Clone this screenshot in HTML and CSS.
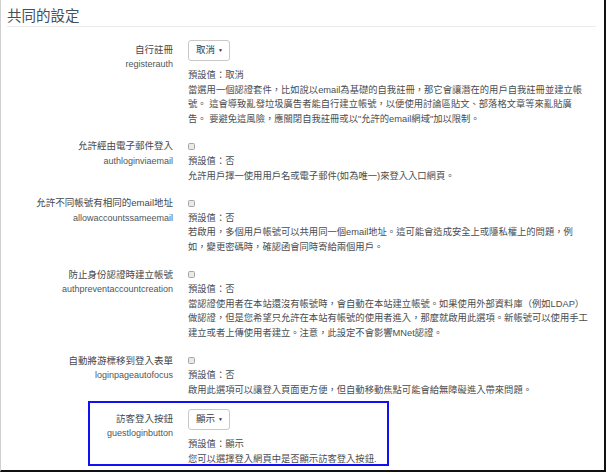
FILE: index.html
```html
<!DOCTYPE html>
<html lang="zh-Hant">
<head>
<meta charset="utf-8">
<title>共同的設定</title>
<link rel="stylesheet" href="styles.css">
</head>
<body>
<div class="frame">
  <h2 class="heading">共同的設定</h2>

  <div class="setting sel-row">
    <div class="lbl"><div class="name">自行註冊</div><div class="short">registerauth</div></div>
    <div class="body">
      <div class="select"><span>取消</span><span class="caret">▼</span></div>
      <div class="def">預設值：取消</div>
      <div class="desc">當選用一個認證套件，比如說以email為基礎的自我註冊，那它會讓潛在的用戶自我註冊並建立帳<br>號。 這會導致亂發垃圾廣告者能自行建立帳號，以便使用討論區貼文、部落格文章等來亂貼廣<br>告。 要避免這風險，應關閉自我註冊或以"允許的email網域"加以限制。</div>
    </div>
  </div>

  <div class="setting">
    <div class="lbl"><div class="name">允許經由電子郵件登入</div><div class="short">authloginviaemail</div></div>
    <div class="body">
      <div class="ctl"><span class="check"></span></div>
      <div class="def">預設值：否</div>
      <div class="desc">允許用戶擇一使用用戶名或電子郵件(如為唯一)來登入入口網頁。</div>
    </div>
  </div>

  <div class="setting">
    <div class="lbl"><div class="name">允許不同帳號有相同的email地址</div><div class="short">allowaccountssameemail</div></div>
    <div class="body">
      <div class="ctl"><span class="check"></span></div>
      <div class="def">預設值：否</div>
      <div class="desc">若啟用，多個用戶帳號可以共用同一個email地址。這可能會造成安全上或隱私權上的問題，例<br>如，變更密碼時，確認函會同時寄給兩個用戶。</div>
    </div>
  </div>

  <div class="setting">
    <div class="lbl"><div class="name">防止身份認證時建立帳號</div><div class="short">authpreventaccountcreation</div></div>
    <div class="body">
      <div class="ctl"><span class="check"></span></div>
      <div class="def">預設值：否</div>
      <div class="desc">當認證使用者在本站還沒有帳號時，會自動在本站建立帳號。如果使用外部資料庫（例如LDAP）<br>做認證，但是您希望只允許在本站有帳號的使用者進入，那麼就啟用此選項。新帳號可以使用手工<br>建立或者上傳使用者建立。注意，此設定不會影響MNet認證。</div>
    </div>
  </div>

  <div class="setting">
    <div class="lbl"><div class="name">自動將游標移到登入表單</div><div class="short">loginpageautofocus</div></div>
    <div class="body">
      <div class="ctl"><span class="check"></span></div>
      <div class="def">預設值：否</div>
      <div class="desc">啟用此選項可以讓登入頁面更方便，但自動移動焦點可能會給無障礙進入帶來問題。</div>
    </div>
  </div>

  <div class="highlight">
    <div class="setting sel-row hl-row">
      <div class="lbl"><div class="name">訪客登入按鈕</div><div class="short">guestloginbutton</div></div>
      <div class="body">
        <div class="select"><span>顯示</span><span class="caret">▼</span></div>
        <div class="def">預設值：顯示</div>
        <div class="desc">您可以選擇登入網頁中是否顯示訪客登入按鈕.</div>
      </div>
    </div>
  </div>
</div>
</body>
</html>
```
FILE: styles.css
```css
* { box-sizing: border-box; }
html, body { margin: 0; padding: 0; background: #fff; }
body {
  font-family: "Liberation Sans", Arial, "Noto Sans CJK TC", sans-serif;
  color: #3a3d40;
}
.frame {
  width: 606px;
  height: 472px;
  border-right: 2px solid #111;
  border-bottom: 2px solid #111;
  border-left: 1px solid #d0d0d0;
  overflow: hidden;
}
.heading {
  margin: 0 8px 13px 6px;
  padding: 6px 0 0 0;
  line-height: 20px;
  height: 27px;
  font-size: 14.5px;
  font-weight: normal;
  color: #45505c;
  border-bottom: 1px solid #ececec;
}
.setting {
  display: grid;
  grid-template-columns: 172px 1fr;
  column-gap: 15px;
  margin-bottom: 13px;
}
.lbl { text-align: right; }
.name {
  font-size: 9.5px;
  line-height: 14.6px;
  color: #44484c;
  white-space: nowrap;
}
.short {
  font-size: 9px;
  line-height: 14.6px;
  color: #50555a;
  white-space: nowrap;
}
.sel-row .name { padding-top: 3px; }
.sel-row .short { line-height: 12px; }
.body { font-size: 9.3px; line-height: 14.6px; color: #4a4d50; }
.ctl { height: 14.6px; display: flex; align-items: center; }
.check {
  width: 7px;
  height: 7px;
  border: 1px solid #a5a5a5;
  border-radius: 1.5px;
  background: #e9e9e9;
}
.select {
  width: 42px;
  height: 21px;
  margin-bottom: 7px;
  border: 1px solid #c9c9c9;
  border-radius: 3px;
  display: flex;
  align-items: center;
  justify-content: space-between;
  padding: 0 6px 0 7px;
  font-size: 9.5px;
  color: #3a3d40;
}
.caret { font-size: 5px; color: #333; }
.desc { white-space: nowrap; }
.highlight {
  margin: -9px 0 0 87px;
  width: 301px;
  height: 65px;
  border: 2px solid #1010f0;
  padding-top: 6px;
  overflow: hidden;
}
.hl-row {
  grid-template-columns: 83px 1fr;
  margin-bottom: 0;
}
```
